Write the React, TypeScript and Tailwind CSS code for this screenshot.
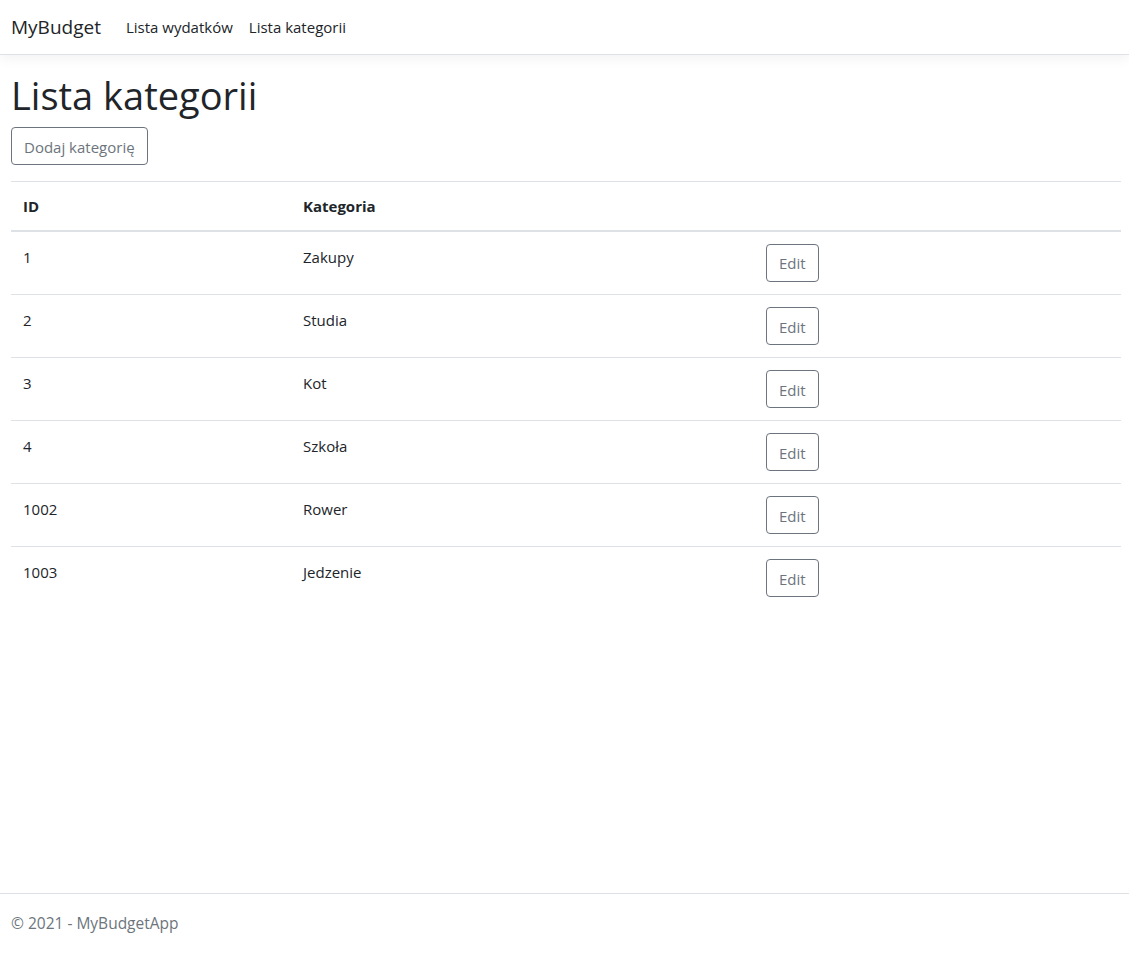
import React from "react";

interface Category {
  id: number;
  name: string;
}

const categories: Category[] = [
  { id: 1, name: "Zakupy" },
  { id: 2, name: "Studia" },
  { id: 3, name: "Kot" },
  { id: 4, name: "Szkoła" },
  { id: 1002, name: "Rower" },
  { id: 1003, name: "Jedzenie" },
];

const font = { fontFamily: '"Open Sans", "Noto Sans", sans-serif' };

const Navbar: React.FC = () => (
  <header className="h-[55px] border-b border-[#dee2e6] bg-white shadow-[0_4px_12px_rgba(0,0,0,0.05)] flex items-center px-[11px]">
    <a className="text-[19px] text-[#212529] mr-[17px]">MyBudget</a>
    <nav className="flex">
      <a className="px-[8px] text-[15px] text-[#212529]">Lista wydatków</a>
      <a className="px-[8px] text-[15px] text-[#212529]">Lista kategorii</a>
    </nav>
  </header>
);

const OutlineButton: React.FC<{ children: React.ReactNode }> = ({ children }) => (
  <button className="h-[38px] px-[12px] pt-[2px] border border-[#6c757d] rounded-[4px] text-[15px] text-[#6c757d] bg-white leading-none">
    {children}
  </button>
);

export default function App() {
  return (
    <div className="min-h-screen flex flex-col bg-white text-[#212529]" style={font}>
      <Navbar />
      <main className="flex-1 px-[11px] pt-[16px]">
        <h1 className="text-[38px] leading-[48px] mb-[8px]">Lista kategorii</h1>
        <OutlineButton>Dodaj kategorię</OutlineButton>
        <table className="w-[1110px] mt-[16px] border-collapse text-[15px]">
          <thead>
            <tr className="border-t border-[#dee2e6] border-b-2">
              <th className="w-[280px] text-left font-bold px-[12px] h-[49px]">ID</th>
              <th className="w-[463px] text-left font-bold px-[12px]">Kategoria</th>
              <th className="px-[12px]"></th>
            </tr>
          </thead>
          <tbody>
            {categories.map((c, i) => (
              <tr key={c.id} className={i < categories.length - 1 ? "border-b border-[#dee2e6]" : ""}>
                <td className={`px-[12px] pt-[14px] align-top ${i === 0 ? "h-[64px]" : "h-[63px]"}`}>{c.id}</td>
                <td className="px-[12px] pt-[14px] align-top">{c.name}</td>
                <td className="px-[12px] align-top pt-[12px]">
                  <OutlineButton>Edit</OutlineButton>
                </td>
              </tr>
            ))}
          </tbody>
        </table>
      </main>
      <footer className="border-t border-[#dee2e6] h-[61px] flex items-center px-[11px] text-[15.5px] text-[#6c757d]">
        © 2021 - MyBudgetApp
      </footer>
    </div>
  );
}
